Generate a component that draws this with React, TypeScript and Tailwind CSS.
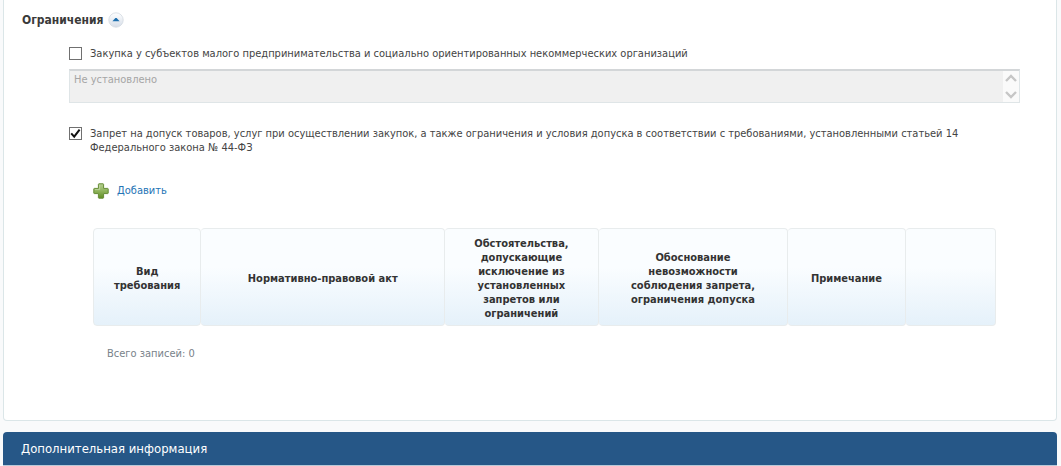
import { FC, useState } from 'react';

const columns = [
    { title: "Вид требования", width: "w-[12%]", padding: "px-2" },
    { title: "Нормативно-правовой акт", width: "w-[27%]", padding: "px-2" },
    { title: "Обстоятельства, допускающие исключение из установленных запретов или ограничений", width: "w-[17%]", padding: "px-5" },
    { title: "Обоснование невозможности соблюдения запрета, ограничения допуска", width: "w-[21%]", padding: "px-6" },
    { title: "Примечание", width: "w-[13%]", padding: "px-2" },
    { title: "", width: "w-[10%]", padding: "px-2" },
]

const CollapseIcon: FC = () => (
    <svg className="size-4" viewBox="0 0 16 16" aria-hidden="true">
        <defs>
            <linearGradient id="collapse" x1="0" y1="0" x2="0" y2="1">
                <stop offset="0" stopColor="#ffffff" />
                <stop offset="1" stopColor="#d5dde8" />
            </linearGradient>
        </defs>
        <circle cx="8" cy="8" r="7.2" fill="url(#collapse)" stroke="#d3d9e1" strokeWidth="0.8" />
        <path d="M4.4 9.2 L7.4 6 H8.6 L11.6 9.2 Z" fill="#1d6fae" />
    </svg>
)

const PlusIcon: FC = () => (
    <svg className="size-4" viewBox="0 0 16 16" aria-hidden="true">
        <defs>
            <linearGradient id="plus" x1="0" y1="0" x2="0" y2="1">
                <stop offset="0" stopColor="#b5cf92" />
                <stop offset="0.5" stopColor="#8fb45c" />
                <stop offset="1" stopColor="#5f8d22" />
            </linearGradient>
        </defs>
        <path
            d="M6 .8h4a.6.6 0 0 1 .6.6v4h4a.6.6 0 0 1 .6.6v4a.6.6 0 0 1-.6.6h-4v4a.6.6 0 0 1-.6.6H6a.6.6 0 0 1-.6-.6v-4h-4A.6.6 0 0 1 .8 10V6a.6.6 0 0 1 .6-.6h4v-4A.6.6 0 0 1 6 .8Z"
            fill="url(#plus)"
            stroke="#668c35"
        />
        <path d="M6.6 2v4.6H2" fill="none" stroke="#c3d8a6" strokeWidth="0.8" />
    </svg>
)

const Checkbox: FC<{ id: string, checked: boolean, onChange: (value: boolean) => void }> = ({ id, checked, onChange }) => (
    <span className="grid size-[13px] shrink-0">
        <input
            id={id}
            type="checkbox"
            checked={checked}
            onChange={(e) => onChange(e.target.checked)}
            className="col-start-1 row-start-1 size-[13px] appearance-none border border-[#707070] bg-white"
        />
        {checked && (
            <svg className="pointer-events-none z-10 col-start-1 row-start-1 size-[13px]" viewBox="0 0 13 13" aria-hidden="true">
                <path d="M2.2 6.4 L5.2 9.6 L10.6 2.6" fill="none" stroke="#111" strokeWidth="2" />
            </svg>
        )}
    </span>
)

const Restrictions: FC = () => {
    const [smallBusiness, setSmallBusiness] = useState(false)
    const [ban, setBan] = useState(true)
    const [open, setOpen] = useState(true)

    return (
        <section className="rounded-b border border-t-0 border-[#dbe6e8] bg-white pt-3 pb-[58px]">
            <div className="flex items-center gap-1 pl-[18px]">
                <h2 className="text-[12px] leading-4 font-bold text-[#3a3a3a]">Ограничения</h2>
                <button type="button" aria-label="Свернуть" aria-expanded={open} onClick={() => setOpen(!open)}>
                    <CollapseIcon />
                </button>
            </div>

            {open && (
                <div className="pt-4 pr-9 pl-[65px]">
                    <div className="flex items-start gap-2 pt-[3px]">
                        <Checkbox id="small-business" checked={smallBusiness} onChange={setSmallBusiness} />
                        <label htmlFor="small-business" className="leading-[14px]">
                            Закупка у субъектов малого предпринимательства и социально ориентированных некоммерческих организаций
                        </label>
                    </div>

                    <div className="mt-2 flex h-[34px] border border-t-2 border-[#dfe5e7] border-t-[#d3d6d8] bg-[#f0f0f0]">
                        <textarea
                            aria-label="Закупка у субъектов малого предпринимательства"
                            disabled
                            value="Не установлено"
                            className="min-w-0 flex-1 resize-none overflow-hidden px-1 py-px leading-4 text-[#a5a5a5]"
                        />
                        <div className="flex w-4 flex-col items-center justify-between bg-[#fafafa] py-[3px]">
                            <svg className="h-2 w-3" viewBox="0 0 12 8" aria-hidden="true">
                                <path d="M1 7 L6 2 L11 7" fill="none" stroke="#c6c6c6" strokeWidth="2.4" />
                            </svg>
                            <svg className="h-2 w-3" viewBox="0 0 12 8" aria-hidden="true">
                                <path d="M1 1 L6 6 L11 1" fill="none" stroke="#c6c6c6" strokeWidth="2.4" />
                            </svg>
                        </div>
                    </div>

                    <div className="mt-6 flex items-start gap-2">
                        <Checkbox id="ban" checked={ban} onChange={setBan} />
                        <label htmlFor="ban" className="max-w-[880px] leading-[14px]">
                            Запрет на допуск товаров, услуг при осуществлении закупок, а также ограничения и условия допуска в соответствии с требованиями, установленными статьей 14 Федерального закона № 44-ФЗ
                        </label>
                    </div>

                    <div className="pt-7 pr-6 pl-6">
                        <a href="#add" className="flex w-fit items-center gap-2 text-[#2474b5]">
                            <PlusIcon />
                            Добавить
                        </a>

                        <table className="mt-7 w-full table-fixed border-separate border-spacing-0">
                            <thead>
                                <tr>
                                    {columns.map((column, i) => (
                                        <th
                                            key={i}
                                            scope="col"
                                            className={`${column.width} ${column.padding} h-[97px] rounded border border-l-0 border-[#e8eced] bg-linear-to-b from-[#fafdff] from-40% to-[#e5f1fa] pt-2 pb-1 text-center align-middle leading-[14px] font-bold text-[#333] first:border-l`}
                                        >
                                            {column.title}
                                        </th>
                                    ))}
                                </tr>
                            </thead>
                        </table>

                        <p className="mt-5 pl-[14px] leading-4 text-[#78828a]">Всего записей: 0</p>
                    </div>
                </div>
            )}
        </section>
    )
}

export default function App() {
    return (
        <div className="min-h-screen bg-[#f9fafb] pr-1 pl-[3px] font-['DejaVu_Sans_Condensed','DejaVu_Sans',sans-serif] text-[11px] text-[#444]">
            <Restrictions />
            <header className="mt-[11px] rounded-t border-b border-[#b9c9d8] bg-[#265787] px-[18px] py-2">
                <h2 className="text-[13px] leading-[17px] text-white">Дополнительная информация</h2>
            </header>
        </div>
    )
}
